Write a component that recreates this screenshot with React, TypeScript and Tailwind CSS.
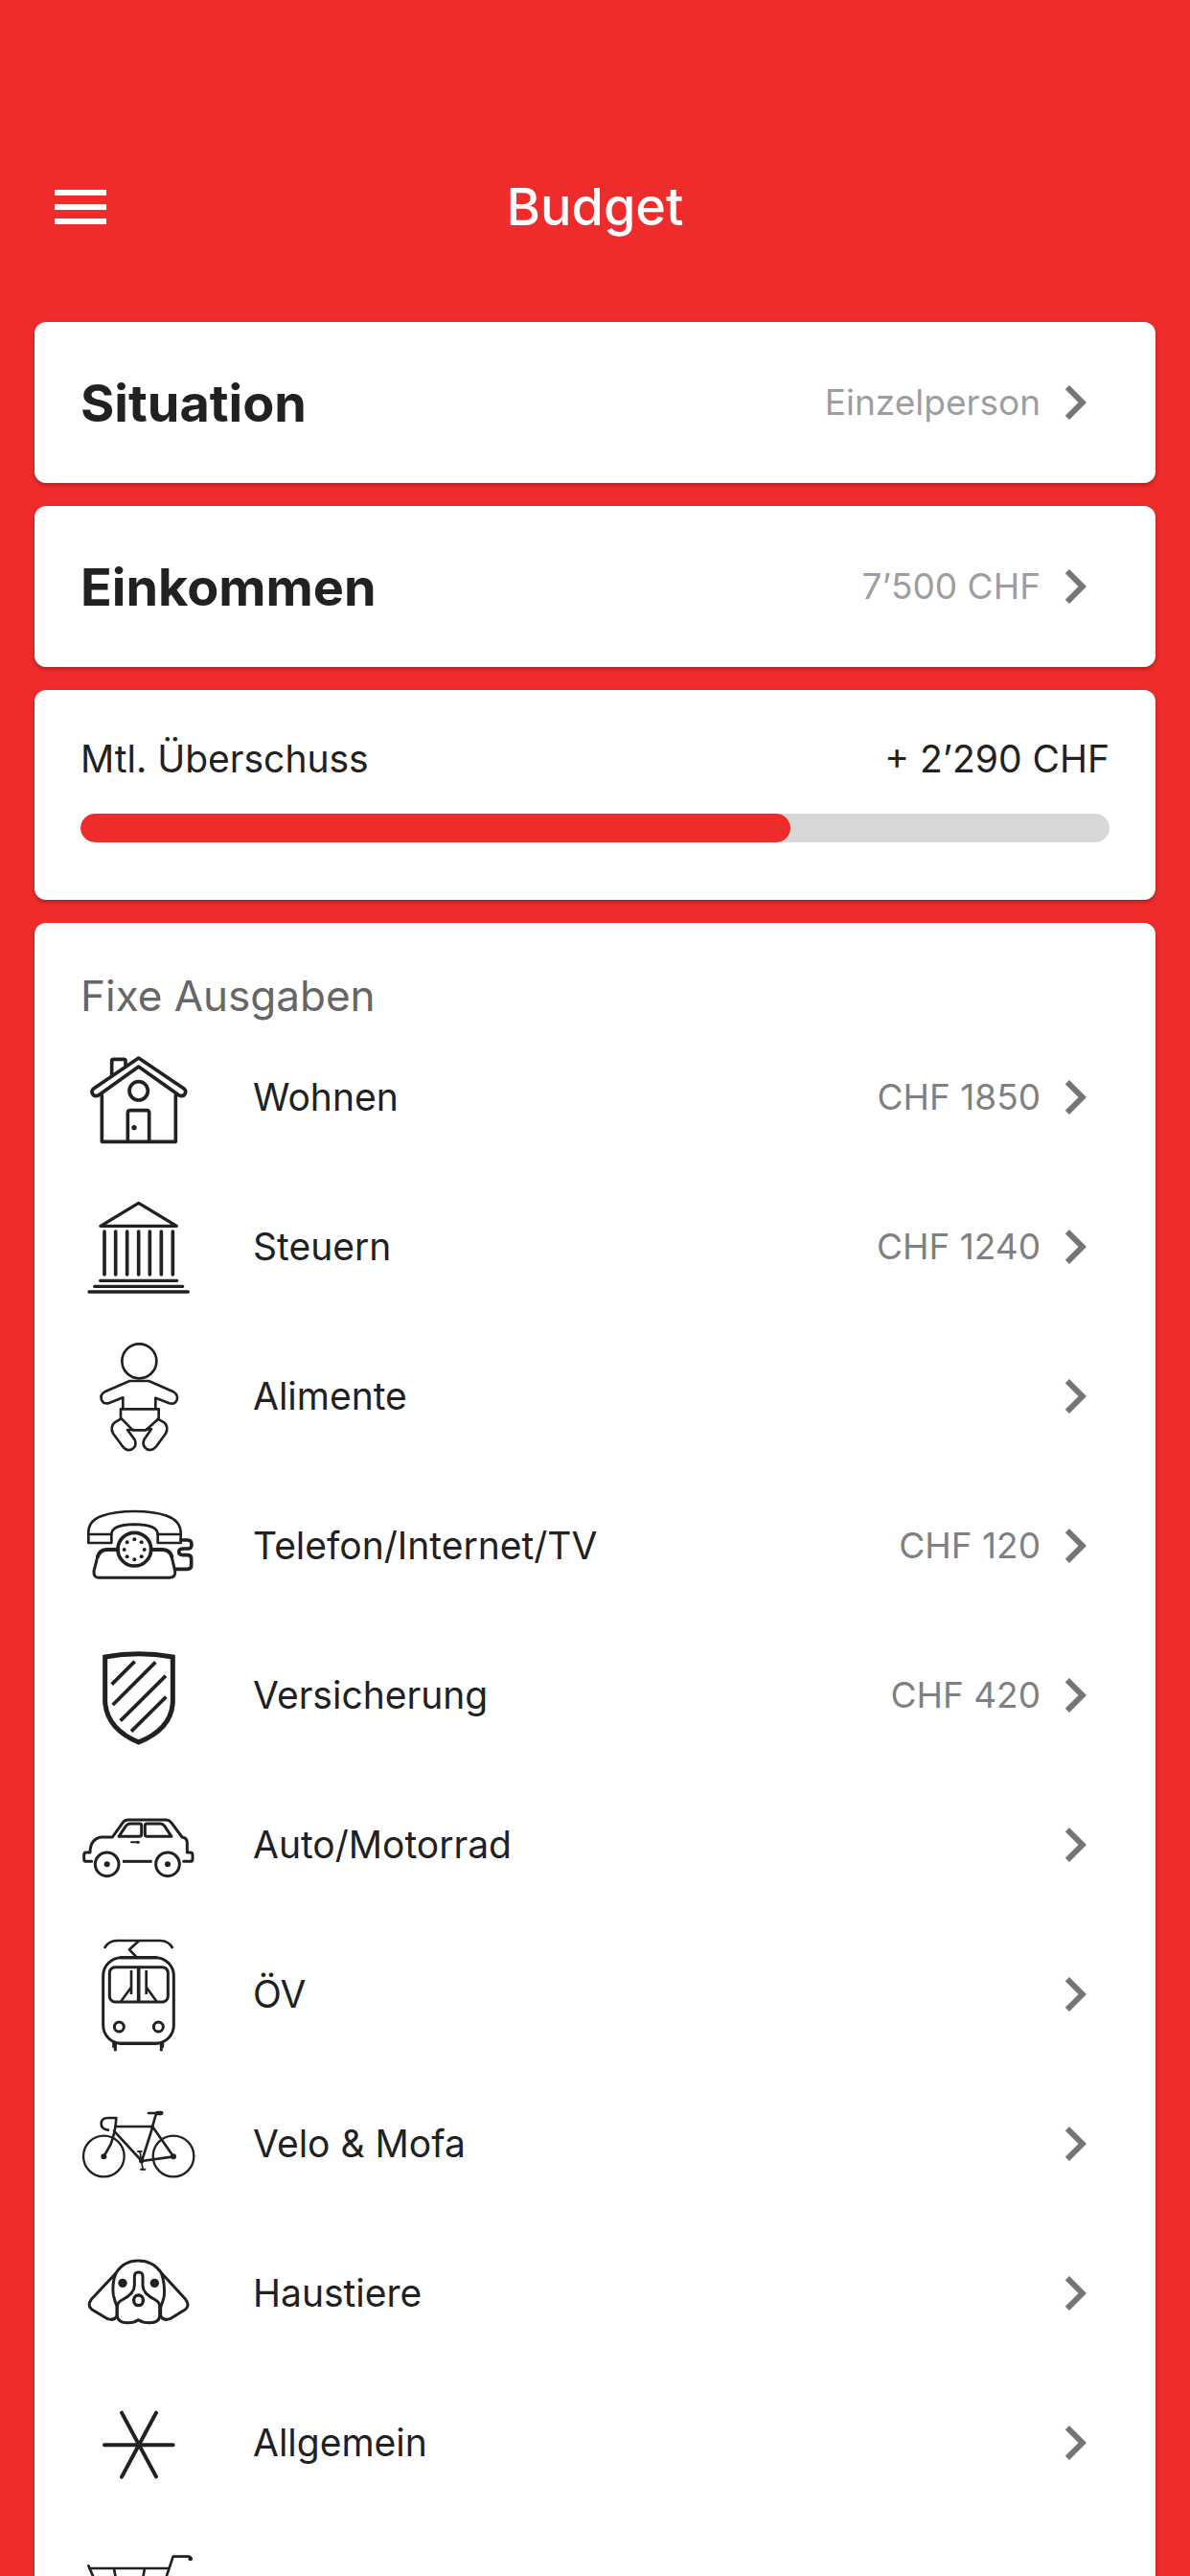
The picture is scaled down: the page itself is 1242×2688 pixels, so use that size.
import React from "react";
import { MdChevronRight, MdMenu } from "react-icons/md";

interface Expense {
  id: number;
  label: string;
  amount?: number;
  viewBox: string;
  icon: React.ReactNode;
}

const expenses: Expense[] = [
  {
    id: 1,
    label: "Wohnen",
    amount: 1850,
    viewBox: "42 -39 360 468",
    icon: (
      <g strokeWidth="11">
        <path d="M140 126V81q0-5 5-5h33q5 0 5 5v17" />
        <path d="M224 72 84 167q-9 7-5 16 6 11 19 6L224 99l127 90q13 5 19-6 4-9-5-16Z" />
        <path d="M109 188v146h231V188" />
        <circle cx="224" cy="175" r="29" />
        <path d="M190 332v-88q0-8 8-8h51q8 0 8 8v88" />
        <circle cx="210" cy="290" r="8" fill="currentColor" stroke="none" />
      </g>
    ),
  },
  {
    id: 2,
    label: "Steuern",
    amount: 1240,
    viewBox: "42 429 360 468",
    icon: (
      <g strokeWidth="10">
        <path d="M224 526 105 598h238Z" />
        <path strokeWidth="11" d="M117 615v135M152 615v135M188 615v135M224 615v135M259 615v135M295 615v135M331 615v135" />
        <path d="M104 769h240M86 787h276M69 804h310" />
      </g>
    ),
  },
  {
    id: 3,
    label: "Alimente",
    viewBox: "42 -3 360 468",
    icon: (
      <g strokeWidth="8">
        <circle cx="226" cy="121" r="54" />
        <path d="M175 269v-34l-43 17q-17 5-24-9-6-17 10-26l78-34h60l77 34q16 9 11 25-7 16-24 11l-43-17v33" />
        <path d="M168 271h119v30l-40 36h-41l-38-38Z" />
        <path d="m168 302-19 11q-15 14-5 34l30 41q13 16 29 9 17-10 9-30l-23-31h20" />
        <path d="m284 302 20 11q15 14 5 34l-29 40q-15 18-31 9-16-11-7-31l22-31h-15" />
      </g>
    ),
  },
  {
    id: 4,
    label: "Telefon/Internet/TV",
    amount: 120,
    viewBox: "42 465 360 468",
    icon: (
      <g strokeWidth="8">
        <path d="M67 663q-3-43 43-58 40-14 101-14t101 14q46 16 44 58v27h-72v-27q0-30-73-31-72 1-72 31v27H67Z" />
        <path d="M67 663h72M284 663h72" />
        <path strokeWidth="12" d="M160 711h-36q-23 2-28 22" />
        <path strokeWidth="12" d="M263 711h36q24 2 29 22" />
        <path strokeWidth="9" d="m96 731-12 47q-2 21 17 21h221q19-2 16-21l-11-47" />
        <circle cx="211" cy="710" r="52" strokeWidth="11" />
        <path strokeWidth="11" d="M357 681h20q13 0 13 14t-13 13h-15q-12 1-12 11 1 9 12 9h15q12 0 12 12v20q0 12-12 12h-37" />
        <g fill="currentColor" stroke="none">
          <circle cx="211" cy="679" r="6" />
          <circle cx="233" cy="688" r="6" />
          <circle cx="242" cy="711" r="6" />
          <circle cx="233" cy="733" r="6" />
          <circle cx="211" cy="742" r="6" />
          <circle cx="188" cy="733" r="6" />
          <circle cx="179" cy="711" r="6" />
          <circle cx="188" cy="688" r="6" />
        </g>
      </g>
    ),
  },
  {
    id: 5,
    label: "Versicherung",
    amount: 420,
    viewBox: "42 3 360 468",
    icon: (
      <g strokeWidth="15" strokeLinecap="butt" strokeLinejoin="miter">
        <path d="M119 117q105-19 212 0v140q-3 85-107 127Q124 342 119 257Z" />
        <g strokeWidth="11">
          <path d="m140 203 72-72M143 267l134-134M167 317 309 176M201 350 310 242" />
        </g>
      </g>
    ),
  },
  {
    id: 6,
    label: "Auto/Motorrad",
    viewBox: "42 -69 360 468",
    icon: (
      <g strokeWidth="9">
        <path d="M77 217H61q-8 0-8-8v-12q0-8 8-8h11q0-42 35-48h35l33-46q6-8 17-8h118q9 0 16 8l34 46q15 2 16 16v32h9q8 0 8 8v12q0 8-8 8h-20" />
        <path d="m162 139 22-33q5-7 13-7h31q5 0 5 6v27q0 7-6 7ZM244 105q0-6 6-6h42q8 0 13 7l22 33h-77q-6 0-6-7Z" />
        <path d="M174 217h92" strokeLinecap="butt" />
        <path d="M201 157h23" strokeWidth="6" />
        <circle cx="222" cy="157" r="5" fill="currentColor" stroke="none" />
        <circle cx="125" cy="226" r="37" />
        <circle cx="315" cy="226" r="37" />
        <g fill="currentColor" stroke="none">
          <circle cx="125" cy="226" r="9" />
          <circle cx="315" cy="226" r="9" />
        </g>
      </g>
    ),
  },
  {
    id: 7,
    label: "ÖV",
    viewBox: "42 -21 360 468",
    icon: (
      <g strokeWidth="9" strokeLinecap="butt">
        <path strokeWidth="8" d="M117 69q12-24 40-24h134q27 0 40 24M225 46l-30 27 23 24" />
        <rect x="113" y="98" width="221" height="269" rx="57" />
        <path d="M165 98h118M165 367h118" strokeWidth="10" />
        <rect x="133" y="128" width="183" height="109" rx="18" />
        <path d="M224 128v109" strokeWidth="11" />
        <path strokeWidth="8" d="M201 138v75M248 138v75M200 192l-31 43M249 192l31 43" />
        <circle cx="163" cy="315" r="15" strokeWidth="9" />
        <circle cx="286" cy="315" r="15" strokeWidth="9" />
        <path strokeWidth="11" d="M147 362v18M298 362v18" />
        <path d="M151 366v25M295 366v25" />
      </g>
    ),
  },
  {
    id: 8,
    label: "Velo & Mofa",
    viewBox: "42 -63 360 468",
    icon: (
      <g strokeWidth="8">
        <circle cx="115" cy="210" r="64" strokeWidth="7" />
        <circle cx="333" cy="210" r="64" strokeWidth="7" />
        <path d="M129 128q-23-2-22-21 1-17 21-17h26q-2 42-17 82l-22 39" />
        <path d="M151 117h117M147 131l87 94 99-14-65-93-34 107" />
        <path d="m266 121 13-44" />
        <path d="M255 75h28" />
        <path d="M283 75h12" strokeWidth="13" />
        <path d="m228 195 9 55" strokeWidth="5" />
        <path d="M222 195h11M231 251h13" strokeWidth="6" />
        <g fill="currentColor" stroke="none">
          <circle cx="115" cy="211" r="9" />
          <circle cx="333" cy="211" r="9" />
          <circle cx="233" cy="224" r="8" />
        </g>
      </g>
    ),
  },
  {
    id: 9,
    label: "Haustiere",
    viewBox: "42 -45 360 468",
    icon: (
      <g strokeWidth="9">
        <path d="M153 126q24-39 70-39t73 39l75 82q14 19 0 31l-49 30q-20 7-29-9v-28q6-14 11-34 3-40-9-72" />
        <path d="m153 126-77 82q-14 19 1 31l50 30q20 7 29-9v-31q-6-14-11-34-5-37 8-69" />
        <path d="M157 237v24q4 22 35 20 18 0 31-9 14 9 33 9 31 2 34-20v-24q3-18-13-27-40-20-40-45v-28q0-14-13-14t-13 14v28q0 25-39 45-17 8-15 27Z" />
        <rect x="209" y="195" width="29" height="32" rx="14" strokeWidth="10" />
        <circle cx="174" cy="157" r="14" fill="currentColor" stroke="none" />
        <circle cx="274" cy="157" r="14" fill="currentColor" stroke="none" />
      </g>
    ),
  },
  {
    id: 10,
    label: "Allgemein",
    viewBox: "162 -27 360 468",
    icon: (
      <g strokeWidth="12">
        <path d="M237 214h215M291 113l108 200M399 113 291 314" />
      </g>
    ),
  },
  {
    id: 11,
    label: "",
    viewBox: "162 441 360 468",
    icon: (
      <g strokeWidth="8">
        <path d="M508 569q-2-6-8-6h-48l-50 150H240L187 592" />
        <path d="M190 600h247M267 600l19 110M363 600l-19 110" />
        <circle cx="506" cy="570" r="7" fill="currentColor" stroke="none" />
        <circle cx="262" cy="750" r="20" />
        <circle cx="384" cy="750" r="20" />
      </g>
    ),
  },
];

const Card = ({ children }: { children: React.ReactNode }) => (
  <section className="rounded-xl bg-white px-12 shadow-[0_2px_4px_rgba(0,0,0,0.3)]">
    {children}
  </section>
);

const SummaryCard = ({ title, value }: { title: string; value: string }) => (
  <Card>
    <button className="flex h-[168px] w-full items-center text-left">
      <span className="flex-1 text-[54px] font-bold">{title}</span>
      <span className="text-[37px] text-[#9e9e9e]">{value}</span>
      <MdChevronRight className="size-[72px] text-[#757575]" />
    </button>
  </Card>
);

const ExpenseRow = ({ expense }: { expense: Expense }) => (
  <li>
    <button className="flex h-[156px] w-full items-center text-left">
      <svg
        viewBox={expense.viewBox}
        className="mr-[60px] h-[156px] w-[120px] shrink-0"
        fill="none"
        stroke="currentColor"
        strokeLinecap="round"
        strokeLinejoin="round"
        aria-hidden="true"
      >
        {expense.icon}
      </svg>
      <span className="flex-1 text-[39px]">{expense.label}</span>
      {expense.amount && (
        <span className="text-[37px] text-[#808080]">CHF {expense.amount}</span>
      )}
      {expense.label && (
        <MdChevronRight className="size-[72px] text-[#757575]" />
      )}
    </button>
  </li>
);

const App = () => {
  const spentPercent = 69;

  return (
    <div className="h-screen overflow-hidden bg-[#ef2c2c] font-['Inter','Liberation_Sans',sans-serif] text-[#212121]">
      <header className="grid grid-cols-3 items-center px-12 pt-24 text-white">
        <button aria-label="Menü" className="justify-self-start">
          <MdMenu className="size-[72px]" />
        </button>
        <h1 className="text-center text-[54px] leading-[240px] font-medium">
          Budget
        </h1>
      </header>

      <main className="flex flex-col gap-6 px-9">
        <SummaryCard title="Situation" value="Einzelperson" />
        <SummaryCard title="Einkommen" value="7’500 CHF" />

        <Card>
          <div className="flex justify-between pt-12 text-[39px] leading-[48px]">
            <span>Mtl. Überschuss</span>
            <span>+ 2’290 CHF</span>
          </div>
          <div className="mt-[33px] mb-[60px] h-[30px] overflow-hidden rounded-full bg-[#d8d8d8]">
            <div
              className="h-full rounded-full bg-[#ef2c2c]"
              style={{ width: `${spentPercent}%` }}
            />
          </div>
        </Card>

        <Card>
          <h2 className="pt-12 text-[44px] leading-[56px] text-[#666666]">
            Fixe Ausgaben
          </h2>
          <ul>
            {expenses.map((expense) => (
              <ExpenseRow key={expense.id} expense={expense} />
            ))}
          </ul>
        </Card>
      </main>
    </div>
  );
};

export default App;
